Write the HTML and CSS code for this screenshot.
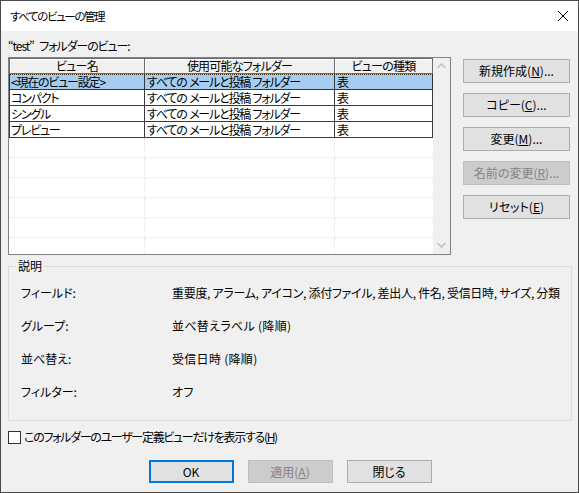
FILE: index.html
```html
<!DOCTYPE html>
<html lang="ja">
<head>
<meta charset="utf-8">
<title>すべてのビューの管理</title>
<link rel="stylesheet" href="styles.css">
</head>
<body>
<div class="window">
  <div class="titlebar">
    <span class="title">すべてのビューの管理</span>
    <svg class="close" width="12" height="12" viewBox="0 0 12 12"><path d="M1 1 L11 11 M11 1 L1 11" stroke="#000" stroke-width="1" fill="none"/></svg>
  </div>
  <div class="content">
    <div class="caption">“test” フォルダーのビュー:</div>
    <div class="main">
      <div class="listbox">
        <div class="list">
          <div class="hdr">
            <div class="c1">ビュー名</div>
            <div class="c2">使用可能なフォルダー</div>
            <div class="c3">ビューの種類</div>
          </div>
          <div class="row sel">
            <div class="c1">&lt;現在のビュー設定&gt;</div>
            <div class="c2">すべての メールと投稿 フォルダー</div>
            <div class="c3">表</div>
          </div>
          <div class="row">
            <div class="c1">コンパクト</div>
            <div class="c2">すべての メールと投稿 フォルダー</div>
            <div class="c3">表</div>
          </div>
          <div class="row">
            <div class="c1">シングル</div>
            <div class="c2">すべての メールと投稿 フォルダー</div>
            <div class="c3">表</div>
          </div>
          <div class="row">
            <div class="c1">プレビュー</div>
            <div class="c2">すべての メールと投稿 フォルダー</div>
            <div class="c3">表</div>
          </div>
          <div class="empty"><div class="c1"></div><div class="c2"></div><div class="c3"></div></div>
          <div class="empty"><div class="c1"></div><div class="c2"></div><div class="c3"></div></div>
          <div class="empty"><div class="c1"></div><div class="c2"></div><div class="c3"></div></div>
          <div class="empty"><div class="c1"></div><div class="c2"></div><div class="c3"></div></div>
          <div class="empty"><div class="c1"></div><div class="c2"></div><div class="c3"></div></div>
          <div class="empty last"><div class="c1"></div><div class="c2"></div><div class="c3"></div></div>
        </div>
        <div class="scroll">
          <svg width="17" height="17" viewBox="0 0 17 17"><path d="M4.5 10 L8.5 6 L12.5 10" stroke="#c2c2c2" stroke-width="1.6" fill="none"/></svg>
          <svg width="17" height="17" viewBox="0 0 17 17"><path d="M4.5 7 L8.5 11 L12.5 7" stroke="#c2c2c2" stroke-width="1.6" fill="none"/></svg>
        </div>
      </div>
      <div class="side">
        <button class="btn">新規作成(<u>N</u>)...</button>
        <button class="btn">コピー(<u>C</u>)...</button>
        <button class="btn">変更(<u>M</u>)...</button>
        <button class="btn disabled">名前の変更(<u>R</u>)...</button>
        <button class="btn">リセット(<u>E</u>)</button>
      </div>
    </div>
    <div class="group">
      <span class="legend">説明</span>
      <div class="desc">
        <div class="lbl">フィールド:</div>
        <div class="val long">重要度, アラーム, アイコン, 添付ファイル, 差出人, 件名, 受信日時, サイズ, 分類</div>
        <div class="lbl">グループ:</div>
        <div class="val">並べ替えラベル (降順)</div>
        <div class="lbl">並べ替え:</div>
        <div class="val">受信日時 (降順)</div>
        <div class="lbl">フィルター:</div>
        <div class="val">オフ</div>
      </div>
    </div>
    <div class="check">
      <span class="box"></span>
      <span class="check-label">このフォルダーのユーザー定義ビューだけを表示する(<u>H</u>)</span>
    </div>
    <div class="actions">
      <button class="btn act default">OK</button>
      <button class="btn act disabled">適用(<u>A</u>)</button>
      <button class="btn act">閉じる</button>
    </div>
  </div>
</div>
</body>
</html>
```

FILE: styles.css
```css
* { box-sizing: border-box; }
html, body { margin: 0; padding: 0; }
body {
  font-family: "Noto Sans CJK JP", "Noto Sans", sans-serif;
  font-size: 12px;
  font-feature-settings: "palt";
  color: #000;
  background: #fff;
}
.window {
  width: 579px;
  height: 493px;
  border: 1px solid #4a4a4a;
  background: #f0f0f0;
  display: flex;
  flex-direction: column;
}
.titlebar {
  height: 30px;
  background: #fff;
  display: flex;
  align-items: center;
  justify-content: space-between;
  padding: 0 9px 0 9px;
  flex: none;
}
.title { line-height: 16px; font-size: 11.5px; letter-spacing: -1.4px; }
.close { display: block; }
.content {
  padding: 7px 6px 0 7px;
  display: flex;
  flex-direction: column;
}
.caption { line-height: 16px; height: 16px; margin-bottom: 3px; letter-spacing: -1.1px; word-spacing: 4px; }
.main { display: flex; gap: 12px; align-items: flex-start; }
.listbox {
  width: 443px;
  height: 198px;
  border: 1px solid #828282;
  background: #fff;
  display: flex;
  overflow: hidden;
}
.list { width: 424px; flex: none; }
.hdr, .row, .empty { display: flex; }
.c1 { width: 136px; }
.c2 { width: 190px; }
.c3 { width: 98px; }
.hdr > div {
  height: 16px;
  line-height: 14px;
  text-align: center;
  letter-spacing: -0.8px;
  background: #f0f0f0;
  border-top: 1px solid #6b6b6b;
  border-bottom: 1px solid #6b6b6b;
  border-right: 1px solid #6b6b6b;
  box-shadow: inset 1px 1px 0 #fff;
}
.hdr > .c1 { border-left: 1px solid #6b6b6b; }
.row > div {
  height: 16px;
  line-height: 15px;
  letter-spacing: -1.2px;
  word-spacing: 1px;
  border-bottom: 1px solid #3a3a3a;
  border-right: 1px solid #3a3a3a;
  padding-left: 2px;
  white-space: nowrap;
  overflow: hidden;
}
.row > .c1 { border-left: 1px solid #3a3a3a; padding-left: 1px; }
.row.sel { background: #a6cdf0; outline: 1px dotted #3a2a10; outline-offset: -1px; }
.empty > div {
  height: 20px;
  border-bottom: 1px dotted #e2e2e2;
  border-right: 1px dotted #e2e2e2;
}
.empty > .c3 { border-right: none; }
.scroll {
  width: 17px;
  flex: none;
  background: #f0f0f0;
  display: flex;
  flex-direction: column;
  justify-content: space-between;
  padding: 0 0 1px 0;
}
.scroll svg { display: block; }
.side {
  display: flex;
  flex-direction: column;
  gap: 10px;
  margin-top: 2px;
}
.btn {
  font: inherit;
  font-feature-settings: "palt";
  width: 107px;
  height: 24px;
  background: #e1e1e1;
  border: 1px solid #adadad;
  color: #000;
  padding: 0;
  line-height: 16px;
  text-align: center;
}
.btn.disabled {
  background: #cccccc;
  border-color: #bfbfbf;
  color: #838383;
}
.group {
  position: relative;
  margin-top: 11px;
  height: 155px;
  border: 1px solid #dcdcdc;
}
.legend {
  position: absolute;
  top: -9px;
  left: 7px;
  padding: 0 2px;
  line-height: 16px;
  background: #f0f0f0;
}
.desc {
  display: grid;
  grid-template-columns: 151px 400px;
  grid-auto-rows: 33px;
  align-items: center;
  padding: 9px 0 0 12px;
}
.val { white-space: nowrap; letter-spacing: 0.3px; }
.val.long { letter-spacing: -0.3px; }
.check {
  display: flex;
  align-items: center;
  gap: 3px;
  margin-top: 8px;
  line-height: 16px;
  height: 16px;
}
.check-label { letter-spacing: -1.3px; }
.box {
  width: 13px;
  height: 13px;
  border: 1px solid #333;
  background: #fff;
  flex: none;
}
.actions {
  display: flex;
  justify-content: center;
  gap: 14px;
  margin-top: 15px;
}
.btn.act { width: 85px; height: 23px; }
.btn.default { border: 2px solid #0078d7; }
```
